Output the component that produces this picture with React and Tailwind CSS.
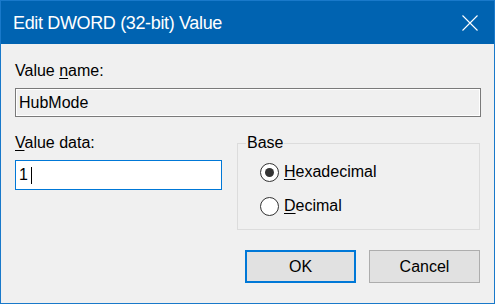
import React from 'react';

const font = { fontFamily: '"Liberation Sans", Arial, sans-serif' };

const Radio = ({ checked, children }) => (
    <label className="flex items-center gap-[5px] h-[20px] text-[16px] leading-[18px] text-black">
        <span className="w-[19px] h-[19px] rounded-full border border-[#333] bg-white flex items-center justify-center">
            {checked && <span className="w-[9px] h-[9px] rounded-full bg-[#333]" />}
        </span>
        <span>{children}</span>
    </label>
);

export default function App() {
    return (
        <div className="w-[495px] h-[304px] border border-[#1979ca] bg-[#f0f0f0] flex flex-col" style={font}>
            <div className="h-[43px] bg-[#0063b1] flex items-center justify-between pl-[12px] pr-[16px] text-white">
                <span className="text-[18px] leading-[20px] tracking-[-0.35px] mt-[1px]">Edit DWORD (32-bit) Value</span>
                <svg width="16" height="16" viewBox="0 0 16 16" className="mt-[1px]">
                    <path d="M0.5 0.5 L15.5 15.5 M15.5 0.5 L0.5 15.5" stroke="white" strokeWidth="1.1" fill="none" />
                </svg>
            </div>

            <div className="pl-[14px] pt-[18px] flex flex-col">
                <div className="text-[16px] leading-[18px] text-black">
                    Value <span className="underline underline-offset-2">n</span>ame:
                </div>
                <div className="mt-[8px] w-[466px] h-[29px] border border-[#7a7a7a] shadow-[inset_0_0_0_1px_#ffffff] bg-[#f0f0f0] flex items-center pl-[3px] text-[16px] text-black">
                    HubMode
                </div>

                <div className="mt-[17px] flex items-start">
                    <div className="w-[207px] flex flex-col">
                        <div className="text-[16px] leading-[18px] text-black">
                            <span className="underline underline-offset-2">V</span>alue data:
                        </div>
                        <div className="mt-[8px] h-[30px] border border-[#0078d7] bg-white flex items-center pl-[3px] text-[16px] text-black">
                            <span>1</span>
                            <span className="ml-[3px] w-[1px] h-[17px] bg-black" />
                        </div>
                    </div>

                    <div className="relative ml-[15px] mt-[9px] w-[243px] h-[87px] border border-[#dcdcdc] pl-[22px] pt-[18px] flex flex-col gap-[14px]">
                        <span className="absolute left-[8px] -top-[10px] bg-[#f0f0f0] px-[1px] text-[16px] leading-[18px] text-black">Base</span>
                        <Radio checked>
                            <span className="underline underline-offset-2">H</span>exadecimal
                        </Radio>
                        <Radio>
                            <span className="underline underline-offset-2">D</span>ecimal
                        </Radio>
                    </div>
                </div>

                <div className="mt-[20px] flex justify-end gap-[13px] w-[466px] pr-[1px]">
                    <button className="w-[111px] h-[33px] border-2 border-[#0078d7] bg-[#e1e1e1] text-[16px] text-black" style={font}>OK</button>
                    <button className="w-[111px] h-[33px] border border-[#adadad] bg-[#e1e1e1] text-[16px] text-black" style={font}>Cancel</button>
                </div>
            </div>
        </div>
    );
}
